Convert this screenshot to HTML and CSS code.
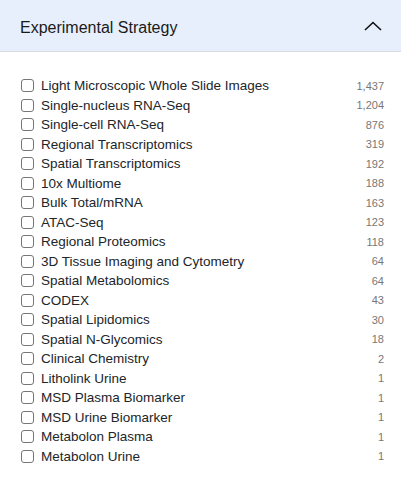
FILE: index.html
```html
<!DOCTYPE html>
<html>
<head>
<meta charset="utf-8">
<link rel="stylesheet" href="styles.css">
</head>
<body>
<div class="panel">
  <div class="header">
    <span class="title">Experimental Strategy</span>
    <svg class="chev" width="18" height="10" viewBox="0 0 18 10"><path d="M1 9 L9 1.5 L17 9" fill="none" stroke="#111" stroke-width="1.6"/></svg>
  </div>
  <ul class="list">
    <li class="row"><span class="box"></span><span class="label">Light Microscopic Whole Slide Images</span><span class="count">1,437</span></li>
    <li class="row"><span class="box"></span><span class="label">Single-nucleus RNA-Seq</span><span class="count">1,204</span></li>
    <li class="row"><span class="box"></span><span class="label">Single-cell RNA-Seq</span><span class="count">876</span></li>
    <li class="row"><span class="box"></span><span class="label">Regional Transcriptomics</span><span class="count">319</span></li>
    <li class="row"><span class="box"></span><span class="label">Spatial Transcriptomics</span><span class="count">192</span></li>
    <li class="row"><span class="box"></span><span class="label">10x Multiome</span><span class="count">188</span></li>
    <li class="row"><span class="box"></span><span class="label">Bulk Total/mRNA</span><span class="count">163</span></li>
    <li class="row"><span class="box"></span><span class="label">ATAC-Seq</span><span class="count">123</span></li>
    <li class="row"><span class="box"></span><span class="label">Regional Proteomics</span><span class="count">118</span></li>
    <li class="row"><span class="box"></span><span class="label">3D Tissue Imaging and Cytometry</span><span class="count">64</span></li>
    <li class="row"><span class="box"></span><span class="label">Spatial Metabolomics</span><span class="count">64</span></li>
    <li class="row"><span class="box"></span><span class="label">CODEX</span><span class="count">43</span></li>
    <li class="row"><span class="box"></span><span class="label">Spatial Lipidomics</span><span class="count">30</span></li>
    <li class="row"><span class="box"></span><span class="label">Spatial N-Glycomics</span><span class="count">18</span></li>
    <li class="row"><span class="box"></span><span class="label">Clinical Chemistry</span><span class="count">2</span></li>
    <li class="row"><span class="box"></span><span class="label">Litholink Urine</span><span class="count">1</span></li>
    <li class="row"><span class="box"></span><span class="label">MSD Plasma Biomarker</span><span class="count">1</span></li>
    <li class="row"><span class="box"></span><span class="label">MSD Urine Biomarker</span><span class="count">1</span></li>
    <li class="row"><span class="box"></span><span class="label">Metabolon Plasma</span><span class="count">1</span></li>
    <li class="row"><span class="box"></span><span class="label">Metabolon Urine</span><span class="count">1</span></li>
  </ul>
</div>
</body>
</html>
```
FILE: styles.css
```css
html, body {
  margin: 0;
  padding: 0;
  background: #fff;
}
body {
  font-family: "Liberation Sans", Arial, sans-serif;
  color: #212529;
}
.panel {
  width: 401px;
}
.header {
  height: 52px;
  box-sizing: border-box;
  background: #e8effc;
  border-bottom: 1px solid #d9dde3;
  display: flex;
  align-items: center;
  justify-content: space-between;
  padding: 2px 19px 0 20px;
}
.title {
  font-size: 16px;
  color: #1a1a1a;
  margin-top: 2px;
}
.chev {
  display: block;
  margin-top: -2px;
}
.list {
  list-style: none;
  margin: 0;
  padding: 24px 16px 0 21px;
}
.row {
  display: flex;
  align-items: center;
  height: 19.5px;
}
.box {
  width: 11px;
  height: 11px;
  border: 1px solid #767676;
  border-radius: 3px;
  flex: none;
  margin-right: 7px;
  background: #fff;
}
.label {
  font-size: 13.5px;
  color: #212529;
  flex: 1;
}
.count {
  font-size: 11px;
  color: #777;
  margin-right: 1px;
}
```
